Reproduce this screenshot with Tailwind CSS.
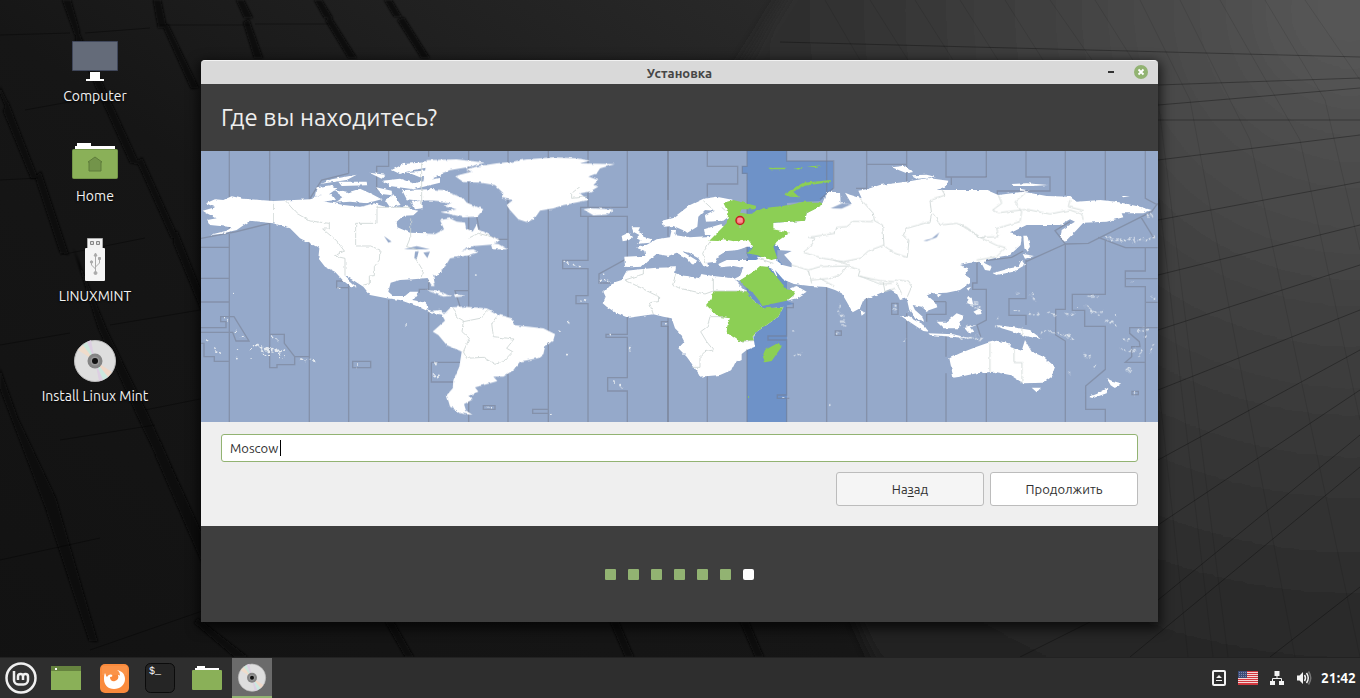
<!DOCTYPE html>
<html lang="ru">
<head>
<meta charset="utf-8">
<title>Установка</title>
<script src="https://cdn.jsdelivr.net/npm/@tailwindcss/browser@4"></script>
</head>
<body class="relative flex h-screen flex-col overflow-hidden bg-[#141414] font-['Ubuntu','Noto_Sans',sans-serif] text-[13px] leading-5">

<!-- Wallpaper -->
<svg class="absolute inset-0 h-full w-full" viewBox="0 0 1360 698" preserveAspectRatio="none" aria-hidden="true">
  <defs>
    <linearGradient id="base" x1="0" y1="1" x2="1" y2="0.3"><stop offset="0" stop-color="#121212"/><stop offset=".45" stop-color="#161616"/><stop offset="1" stop-color="#303030"/></linearGradient>
    <radialGradient id="glow" gradientUnits="userSpaceOnUse" cx="1350" cy="10" r="860"><stop offset="0" stop-color="#585858"/><stop offset=".35" stop-color="#414141"/><stop offset=".7" stop-color="#2b2b2b"/><stop offset="1" stop-color="#1c1c1c"/></radialGradient>
    <filter id="soft"><feGaussianBlur stdDeviation="7"/></filter>
    <filter id="edge"><feGaussianBlur stdDeviation="1"/></filter>
  </defs>
  <rect width="1360" height="698" fill="url(#base)"/>
  <path d="M795-20L735 75 760 400 900 720H1380V-20Z" fill="url(#glow)" filter="url(#soft)"/>
  <g fill="#080808" filter="url(#edge)">
    <path d="M62 0h9l9 32-5 4zM77 28l63 137-10-2-55-122zM142 157l38 84-9-3-34-76zM177 230l28 70v20l-32-78z"/>
    <path d="M153 0h8l6 28h-9zM168 24l31 64-8 1-28-62zM236 0h8l9 18h-9zM249 19l14 39h-9l-11-36zM314 0h8l11 18h-9zM331 17l26 41h-9l-23-38zM384 0h8l10 17h-8zM404 17l26 41h-9l-24-38z"/>
    <path d="M0 86l9 19-3 4-6-15zM8 101l30 77-7 1-28-68zM41 171l28 84-9-2-25-76zM73 247l34 83 40 82 58 128v18l-67-140-40-90zM0 368l18 50 38 80 42 144-9-1-44-134-45-118z"/>
    <path d="M160 440l45 108v22l-50-115zM198 618l50 39h-14l-40-34zM385 622h9l20 35h-9zM610 622h9l15 35h-9zM740 622h9l15 35h-9z"/>
  </g>
  <g stroke="#000" stroke-opacity=".35" fill="none">
    <path d="M85 33l65-5M0 35l70-2M25 110l55-10M60 255l85-17M0 180l38-2M110 325l90-15M0 345l70-12M145 410l60-12M60 440l95-15M0 560l100-22M90 650l115-40M160 25h90M255 24h75"/>
    <path d="M780 42l580 15M1158 85l202-7M1158 105l202-17M1158 120l202 0M1158 160l202-25M1158 220l202-38M1158 275l202-50M1158 330l202-65M1158 390l202-80M1158 460l202-110M1158 525l202-135M1158 600l202-165M1130 657l230-190M1020 657l70-35M1270 657l90-70" stroke-opacity=".3"/>
    <path d="M825 0l35 60M870 0l38 60M915 0l38 60M960 0l38 60M1005 0l38 60M1050 0l42 60M1095 0l63 100 70 557M1140 0l50 100 105 557M1180 0l70 140 110 517M1220 0l80 140 60 280M1265 0l60 100 35 150M1305 0l55 80M1158 190l55 467M1158 380l30 277" stroke-opacity=".1"/>
  </g>
</svg>

<main class="relative flex-1">
  <nav aria-label="Desktop" class="ml-5 flex w-[150px] flex-col pt-9 text-sm leading-5 text-[#f2f2f2]">
    <a href="#computer" class="flex h-25 flex-col items-center gap-0.5">
      <svg class="h-12 w-12" viewBox="0 0 48 48"><path d="M1.500 5.500h45v29h-45z" fill="#646b79" stroke="#40475a"/><path d="M19 36h10v7h4v2H15v-2h4z" fill="#fff"/></svg>
      <span class="[text-shadow:0_1px_2px_black]">Computer</span>
    </a>
    <a href="#home" class="flex h-25 flex-col items-center gap-0.5">
      <svg class="h-12 w-12" viewBox="0 0 48 48"><path d="M4 14V10h2V7h14v3h24v4z" fill="#fff"/><rect x="1.500" y="13.500" width="45" height="29" rx="1" fill="#8ab058" stroke="#739548"/><path d="M17 26l7-5 7 5h-1v9H18v-9z" fill="#73944a" stroke="#5f7d3b"/></svg>
      <span class="[text-shadow:0_1px_2px_black]">Home</span>
    </a>
    <a href="#usb" class="flex h-25 flex-col items-center gap-0.5">
      <svg class="h-12 w-12" viewBox="0 0 48 48"><path d="M16.500 2.500h15v10h-15z" fill="#f4f4f4" stroke="#aaa"/><path d="M19.500 5.500h3v3h-3zm6 0h3v3h-3z" fill="#ddd" stroke="#888"/><rect x="14" y="12" width="20" height="33" rx="1" fill="#f5f5f5"/><g stroke="#aaa" fill="#aaa"><path d="M24.500 37V20M20.500 26v3l4 4M28.500 23v4l-4 4" fill="none"/><path d="M23 20l1.500-3 1.500 3zM27.500 21.500h2v2h-2z"/><circle cx="20.500" cy="26" r="1.200"/><circle cx="24.500" cy="37" r="1.500"/></g></svg>
      <span class="[text-shadow:0_1px_2px_black]">LINUXMINT</span>
    </a>
    <a href="#install" class="flex h-25 flex-col items-center gap-0.5">
      <svg class="h-12 w-12" viewBox="0 0 48 48"><g id="disc"><circle cx="24" cy="25" r="20.500" fill="#dedede" stroke="#bcbcbc"/><path d="M24 25L7 14l5-5z" fill="#efdccb"/><path d="M24 25L12 9l4-3z" fill="#cce7dc"/><path d="M24 25L16 6l4-2z" fill="#ddcfe2"/><path d="M24 25L41 36l-4 5z" fill="#f0d8c8"/><path d="M24 25L37 41l-5 3z" fill="#cce8df"/><path d="M24 25L32 44l-4 1z" fill="#ddcfe2"/><circle cx="24" cy="25" r="7.500" fill="#858585"/><circle cx="24" cy="25" r="4.500" fill="#999"/><circle cx="24" cy="25" r="3" fill="#111"/></g></svg>
      <span class="[text-shadow:0_1px_2px_black]">Install Linux Mint</span>
    </a>
  </nav>

  <!-- Installer window -->
  <section aria-label="Установка" class="absolute top-15 right-[202px] left-[201px] flex flex-col rounded-t-sm bg-[#3e3e3e] shadow-[0_4px_12px_3px_rgba(0,0,0,0.65)]">
    <header class="flex h-6 items-center rounded-t-sm border-t border-[#f2f2f2] bg-[#d9d9d9] pr-2.5 pb-px pl-[55px]">
      <h2 class="flex-1 pt-0.5 text-center text-[13px] leading-5 font-bold text-[#464646]">Установка</h2>
      <div class="flex w-[45px] items-center justify-between">
        <button aria-label="Свернуть" class="flex h-4 w-4 items-center justify-center"><span class="h-0.5 w-1.5 bg-[#333]"></span></button>
        <button aria-label="Закрыть"><svg class="h-3.5 w-3.5" viewBox="0 0 14 14"><circle cx="7" cy="7" r="7" fill="#92b372"/><path d="M4.500 4.500l5 5m0-5l-5 5" stroke="#fff" stroke-width="1.800"/></svg></button>
      </div>
    </header>
    <h3 class="flex h-[67px] items-center px-5 text-2xl text-[#eeeeee]">Где вы находитесь?</h3>

    <svg class="block w-full" viewBox="201 151 957 271" role="img" aria-label="Карта часовых поясов">
      <defs>
        <filter id="coast" x="0" y="0" width="100%" height="100%"><feTurbulence type="fractalNoise" baseFrequency=".2" numOctaves="2" seed="4"/><feDisplacementMap in="SourceGraphic" scale="3" xChannelSelector="R" yChannelSelector="G"/></filter>
        <filter id="scatter" filterUnits="userSpaceOnUse" x="201" y="151" width="957" height="271"><feTurbulence type="fractalNoise" baseFrequency=".12" numOctaves="2" seed="9"/><feDisplacementMap in="SourceGraphic" scale="9" xChannelSelector="R" yChannelSelector="G"/></filter>
      </defs>
      <path d="M201 151h957v271H201z" fill="#95a9ca"/>
      <!-- Selected zone -->
      <path d="M747 151h40v10h46v28l-13 12-33 2v219h-40V174h-5v-8h5z" fill="#6e92c8"/>
      <!-- Zone boundaries over the sea -->
      <g fill="none" stroke="#74798a" stroke-opacity=".5">
        <g transform="translate(200 150) scale(.33333)" stroke-width="4">
          <path d="M88 0V825M88 138V292M3 292H88V385H3M3 456H88V500M3 533H78V515L62 515V500H102L147 573H108L98 547H3M3 580H12V620H43V634H88V825M209 0V653H231V644H284V620H328M209 553H253V580L284 620V644M328 0V825M330 145L365 90 446 70M446 0V70M446 390V825M410 393H446V413H410zM566 0V49H530V120M566 450V825M686 0V20M458 634H512V653H458zM686 480V825M3 265L110 245 209 220M686 386V418H658V428"/>
        </g>
        <g transform="translate(430 150) scale(.33333)" stroke-width="4">
          <path d="M116 0V825M116 190V422H75L90 470M140 200L150 250 205 268H234M234 0V825M355 0V825M474 0V172H452V199H474V331H398V356H474V437H438V461H474V825M592 0V172H474M474 199H592V325L507 372V399H540M592 500V553H528V562H592V683H533V723H592V825M714 0V150M714 350V825M4 637H90M4 637V696H70M160 767H195V778H160zM355 778H308V790H355"/>
        </g>
        <g transform="translate(590 150) scale(.33333)" stroke-width="4">
          <path d="M234 0V260M234 515H214V529H234V825M352 0V49H443V102H352V140M352 675V825M471 0V49H457V70H471V825M590 0V33H731V114L690 148M590 440V460H610V473H590V558H534V570H590V735H562V745H598M590 745V825"/>
        </g>
        <g transform="translate(780 150) scale(.33333)" stroke-width="4">
          <path d="M140 0V130M140 410V825M166 543H184V556H166zM260 0V43H380V0M260 43V115H228M260 440V825M380 43V95M335 460H354V493H335zM380 490V825M498 0V81H620M498 455V493H440V515M498 455H460M498 555V620M498 670V825M514 81V105"/>
        </g>
        <g transform="translate(960 150) scale(.33333)" stroke-width="4">
          <path d="M79 0V81M51 336V399H38V418H79V510L51 525 62 560M79 670V825M198 0V81H270V123H112V135M198 330V446H147V496H198V525M198 335L316 282V478H287V555L316 573V825M316 0V135M316 282L285 242 330 215M316 282L385 280 575 185 593 160M436 0V150M556 0V145L593 165M542 200L582 265M415 262L496 293H593M436 270V433H337V481H374V529H436V658L377 708V778H436V825M556 293V363H496V410H556V640M496 386H593M556 457H593M593 533H509V550L538 575 540 590H515V620L496 637H556V825M516 724H535V734H516zM52 335L155 322 190 303"/>
        </g>
      </g>
      <!-- Land -->
      <g fill="#fff" filter="url(#coast)">
        <g transform="translate(200 150) scale(.33333)">
          <path d="M8 182L45 172 18 160 45 148 70 150 95 139 130 146 220 153 330 148 380 155 430 165 480 170 520 160 560 172 600 170 630 178 655 182 640 196 610 197 590 215 592 232 630 248 680 250 695 275 725 272V368L700 378 704 400 692 398 684 384 640 388 600 390 572 398 565 425 580 438 615 438 630 425 655 425 637 450 665 455 680 462 682 478 700 486 725 480V490L690 487 650 468 600 450 560 445 510 435 490 410 455 388 430 375 470 412 455 412 430 392 405 365 375 350 355 325 358 295 330 280 300 265 270 235 220 220 150 212 110 240 60 252 25 256 80 242 95 232 60 228 30 225 22 210 50 205 20 190z"/>
          <path d="M360 102L395 88 470 74 440 90 385 98zM350 112L392 106 412 115 385 134 345 138zM400 120L440 128 480 116 515 132 545 148 500 160 450 155 405 158 430 142zM415 95L500 95 502 106 425 108zM508 68L556 74 545 86zM575 60L610 42 725 33V45L640 60 600 72zM620 66L725 58V78L660 82zM548 92L600 86 640 100 720 84V98L640 118 570 108zM528 112L575 122 576 136 545 132zM555 150L580 133 602 165 570 172zM606 120L700 118 725 128V150L660 152 620 148zM635 155L668 152 668 175 645 178zM340 140L395 132 408 150 360 156 330 150zM590 176L622 166 640 190 600 198z"/>
        </g>
        <g transform="translate(430 150) scale(.33333)">
          <path d="M-20 250L15 252 42 238 30 210 60 205 80 215 105 218 108 235 128 245 142 220 148 240 190 260 210 272 185 284 130 288 95 300 130 298 145 306 120 315 60 325 45 350 10 370-2 380 14 405 4 405-10 378-30 370zM185 280L205 282 232 298 190 298zM-10 30L80 28 165 38 110 52 60 60 30 72 0 95-20 95zM0 118L40 120 100 145 110 158 160 178 142 200 100 202 60 192 30 186 80 178 40 168 65 158 0 150-20 135z"/>
          <path d="M75 78L125 65 108 58 145 48 200 40 250 35 290 28 370 22 440 25 480 32 450 40 555 42 510 55 500 70 475 80 505 90 490 105 505 110 480 125 450 130 475 150 400 165 370 175 330 182 310 210 295 218 265 208 240 180 230 165 248 150 215 145 220 130 195 105 150 98 100 96zM460 178L480 175 545 178 545 186 530 194 490 196z"/>
          <path d="M-8 484L30 480 42 492 62 472 100 470 170 475 210 495 245 505 252 525 340 535 375 552 370 570 345 590 340 612 325 624 270 635 250 660 220 680 190 680 202 693 160 705 135 712 145 725 115 738 128 748 102 762 108 782 128 795 90 790 60 770 50 735 68 715 70 690 88 650 95 605 50 585 25 555 8 545 45 512 35 494zM-12 420L25 424 65 438 40 440zM72 432L108 438 75 441z"/>
        </g>
        <g transform="translate(590 150) scale(.33333)">
          <path d="M105 350L103 320 150 318 166 318 163 302 138 293 165 287 200 268 240 262 245 240 258 240 256 256 300 262 360 258 390 225 430 240 520 290 470 290 450 300 410 303 385 320 378 335 352 338 355 352 340 348 325 325 295 308 275 303 322 332 308 345 290 325 260 308 235 318 200 312 170 335 155 350 125 352zM216 212L250 203 300 165 340 146 380 140 430 150 430 190 400 212 348 215 345 198 375 182 345 180 325 200 322 230 290 250 278 240 250 228 222 230zM342 238L395 222 400 255 345 255zM125 232L150 232 145 242 158 250 160 260 185 268 180 278 140 282 155 272 138 265 148 255 130 245zM95 258L115 248 126 258 118 270 98 274z"/>
          <path d="M100 380L110 362 150 358 200 353 258 352 255 368 275 375 330 385 335 372 370 378 430 385 450 405 470 425 490 450 525 475 580 472 565 500 530 525 500 545 490 560 495 590 470 600 455 612 455 630 435 640 425 660 390 675 330 680 315 655 290 620 265 595 283 575 270 550 255 535 245 505 220 500 190 493 115 503 80 490 50 470 38 460 47 440 40 425 65 400 95 390zM385 342L410 330 440 330 500 330 500 320 550 325 585 350 620 345 720 345V412L660 408 612 402 572 385 555 360 530 350 448 392 430 388 450 378 460 354 430 348 390 352zM590 452L612 435 600 415 620 408 650 425 620 445z"/>
        </g>
        <g transform="translate(780 150) scale(.33333)">
          <path d="M-40 220L75 212 80 190 125 165 140 128 155 122 180 128 182 160 215 162 195 128 210 134 245 145 235 122 260 118 300 105 380 95 410 90 445 84 505 92 500 108 470 120 540 120 605 120V335L570 338 540 345 568 355 555 375 570 385 570 400 540 420 500 428 460 430 440 435 468 458 472 472 440 483 425 470 398 465 405 480 428 500 432 515 405 505 388 480 380 445 360 450 350 430 330 418 300 430 250 450 240 475 218 487 200 455 185 430 165 420 130 408 80 405 40 400-10 380-30 345 35 345 0 325 0 290-40 270z"/>
          <path d="M335 52L370 48 400 66 380 70zM395 76L440 74 465 80 415 86zM240 480L256 488 245 497zM362 497L385 500 430 525 447 545 430 543 395 520zM445 550L520 553 570 565 450 555zM470 515L500 515 530 490 552 498 535 535 490 535zM550 530L592 525 570 532 580 545 565 548zM562 440L575 443 580 465 562 460zM580 485L600 475 605 492 590 494zM560 415L573 410 565 422zM470 430L485 434 475 440z"/>
        </g>
        <g transform="translate(960 150) scale(.33333)">
          <path d="M0 120L80 120 115 135 190 125 260 138 330 140 350 155 420 150 470 155 540 170 575 180 550 190 485 190 490 202 440 215 370 218 350 240 315 275 302 265 305 240 345 215 330 208 300 225 200 225 150 250 185 260 182 285 150 315 120 320 80 330 74 340 95 350 90 362 75 360 62 335 0 340-40 340V120zM155 102L200 100 265 105 220 108 160 108zM180 116L210 122 180 122zM485 138L510 138 490 142zM190 260L203 260 210 290 200 305 193 295zM188 312L222 318 195 326zM185 330L195 345 160 365 110 375 98 370 150 355 175 350z"/>
          <path d="M108 525L160 532 210 540 245 567 195 558 160 545 125 535zM-32 625L0 610 50 590 80 580 110 572 150 580 148 590 185 602 195 570 215 605 250 620 285 650 275 680 250 698 190 700 150 675 100 665 50 670 0 680-20 683zM215 713L243 713 230 727zM440 685L455 692 483 700 465 714 452 706zM388 740L410 732 445 713 440 730 400 744z"/>
        </g>
      </g>
      <!-- Inland water -->
      <g fill="#95a9ca">
        <path transform="translate(200 150) scale(.33333)" d="M612 297L650 288 690 298 640 298zM645 305L656 304 650 328 643 325zM670 308L690 305 682 324zM552 258L575 275 565 278zM420 160L515 160 490 168z"/>
        <path transform="translate(590 150) scale(.33333)" d="M562 300L605 303 582 314 605 340 605 352 578 345 562 325zM385 318L410 303 440 306 470 312 476 325 440 325 390 333zM430 304L470 292 455 305zM262 352L325 348 382 358 375 376 335 372 315 382 268 374z"/>
        <path transform="translate(780 150) scale(.33333)" d="M430 272L455 266 478 247 470 262 440 273zM152 175L186 160 215 162 185 176z"/>
      </g>
      <path transform="translate(590 150) scale(.33333)" d="M471 310L500 318 505 328 478 330zM450 392L475 422 515 470 590 452 612 462 525 478 505 468zM555 360L590 400 590 415 572 405z" fill="#6e92c8"/>
      <!-- Selected land -->
      <g fill="#8ccf55" filter="url(#coast)">
        <path transform="translate(590 150) scale(.33333)" d="M400 158L430 150 500 168 495 178 455 178 450 188 480 192 520 175 600 165 640 155 690 155 697 165 670 180 650 190 645 212 550 218 550 238 600 248 575 265 560 275 550 290 562 325 545 330 500 315 470 310 490 290 475 270 440 275 400 268 385 273 358 272 375 255 410 220 415 190zM583 134L610 115 640 98 722 90 722 96 645 107 610 125 628 142 600 140zM370 423L470 423 490 450 520 475 580 472 565 500 530 525 500 545 488 560 492 572 448 574 410 548 412 525 420 505 385 500 348 465 365 445zM448 392L490 365 510 348 530 350 555 375 580 405 590 418 617 425 612 435 590 452 520 467 490 430 460 405zM525 600L565 578 575 590 545 633 525 637 518 618zM535 53h55l-5 5h-45zM610 56l30-5-15 8zM650 50l45-4-20 6z"/>
      </g>
      <path d="M748 397h1" stroke="#8ccf55" stroke-width="1.500"/>
      <!-- Small islands -->
      <g fill="none" stroke="#e6ebf0" stroke-width="5" stroke-linecap="round" stroke-dasharray="3 11" filter="url(#scatter)">
        <g transform="translate(200 150) scale(.33333)"><path d="M105 434h1M73 505l17 9M103 546l8-6M128 563h1M20 570l8 4M44 603l26 5M110 592l8 4M110 620h1M152 601l12-13 80 12M170 592l90 12M185 600l50 4M188 611l20 3M153 627h1M236 606v15M253 622l10-6M218 558l18 9M302 630l48 3M472 645h1M418 409h1M700 676h18M705 640h6M618 525h1"/></g>
        <g transform="translate(430 150) scale(.33333)"><path d="M12 640h5M10 676h15M137 375h1M403 340l48 7M508 394h40M517 373h1M450 450l25 5M418 518h1M392 541h1M415 614h8M536 557h3M605 593h1M554 693h1M576 710h1M170 773h20M706 521h2M360 788h5"/></g>
        <g transform="translate(780 150) scale(.33333)"><path d="M45 542h1M44 616l18-4M5 740h6M175 470l10 30 2 28M173 548h5M344 465l-3 24M150 759h10M372 576h1M555 562l45-2"/></g>
        <g transform="translate(960 150) scale(.33333)"><path d="M172 428h1M215 432l12 25M160 485h24M110 500l8 8M205 492l38-5M270 485l15 10M320 492h24M353 472h1M378 470l40 25M390 437h20M395 485l36-6M441 512l30 20M465 495h12M245 548l36-5M295 548l50 20M375 615l15 5M400 653h1M328 666h4M490 568l20 2M480 600l50 0M545 600l-10 20M505 660l10-8M535 540l40-1M555 560l10 5M577 585v22M512 393h10M522 729h5M577 447h5M440 267l50 5 100-7M562 197h15M35 465l30 25M20 530l25 5M0 562l60 2M105 532h20M30 450l25 20"/></g>
      </g>
      <!-- Borders over land -->
      <g fill="none" stroke="#cbd4d2" stroke-width="2.500" filter="url(#coast)">
        <g transform="translate(200 150) scale(.33333)"><path d="M220 153V220M257 153L290 190 330 213 388 220V237H368L410 272 433 303 403 318 435 325V378M632 155V172H531V220H467V288H512L540 300 538 330 523 350V377L508 378V402L490 405M632 205V260L620 290 655 300M646 325L668 360 663 388M665 40V165"/></g>
        <g transform="translate(430 150) scale(.33333)"><path d="M70 472L80 500 100 512 96 545 118 565 100 605 110 625 160 622 195 643 220 635 248 605 230 595 252 567 190 560 185 520 200 500M100 515L150 505 175 480M115 265L145 250 190 262M450 110L425 130 425 145 470 140"/></g>
        <g transform="translate(590 150) scale(.33333)"><path d="M160 358V372L105 390 206 440 205 455 178 458 190 493M258 370L248 405 270 415 345 432 370 423H470M370 385V425M410 500H360L352 530 332 545 350 575 370 600 345 605 330 620V652H310M348 340L338 310 360 275M340 152L370 180M395 172L410 185M448 574L492 572M505 325L550 340"/></g>
        <g transform="translate(780 150) scale(.33333)"><path d="M240 145L280 190 283 212 308 225 312 285 265 303 240 325 190 335 130 325 70 307 90 290 105 265 85 262 165 250 170 232 200 230 220 214 280 215M312 287L345 310 382 322 387 270 370 255 380 235 450 215 455 192 450 152 495 135 485 118M460 192L480 225 530 220 560 232 600 262M35 345L85 360 95 400M85 360L120 350 200 348 240 360 235 378 300 392 340 395 360 390 385 395 395 410 382 440M240 378L300 402 335 400M200 350L180 375 150 385 95 390M160 330L210 345M310 400L315 425 345 415M350 400L365 430M120 385L165 410"/></g>
        <g transform="translate(960 150) scale(.33333)"><path d="M115 135L125 160 98 180 115 188 200 178 270 192 330 180 365 192 370 210M195 130L165 155 185 185 180 215 110 235 115 260 60 262 0 223M60 262L108 285 137 293 110 320 50 330M330 150L325 170 372 182M90 580V665M162 592V638H186V700M186 535V555"/></g>
      </g>
      <g stroke="#c51e22"><path d="M740 224v4" stroke="#b9b9b9"/><circle cx="740" cy="220.500" r="4" fill="#f77d7d" stroke-width="1.500"/><path d="M738 219h4m-4 2h4" stroke="#fac0c0" stroke-width=".7"/></g>
    </svg>

    <form class="flex h-26 flex-col gap-2.5 bg-[#efefef] px-5 pt-3 text-[#303030]" onsubmit="return false">
      <label class="relative block">
        <input type="text" value="Moscow" aria-label="Город" class="block h-7 w-full rounded-[3px] border border-[#92b372] bg-white px-2 text-[13px] text-[#303030] outline-none">
        <span class="absolute top-1.5 left-[59px] h-4 w-px bg-black"></span>
      </label>
      <div class="flex justify-end gap-1.5">
        <button type="button" class="h-[34px] w-[148px] rounded-[3px] border border-[#bcbcbc] bg-[#f5f5f5]">На<span class="underline underline-offset-2">з</span>ад</button>
        <button type="button" class="h-[34px] w-[148px] rounded-[3px] border border-[#bcbcbc] bg-white">Продолжить</button>
      </div>
    </form>
    <div class="flex h-24 items-center justify-center gap-3" role="img" aria-label="Шаг 7 из 7">
      <span class="size-[11px] rounded-[1px] bg-[#92b372]"></span><span class="size-[11px] rounded-[1px] bg-[#92b372]"></span><span class="size-[11px] rounded-[1px] bg-[#92b372]"></span><span class="size-[11px] rounded-[1px] bg-[#92b372]"></span><span class="size-[11px] rounded-[1px] bg-[#92b372]"></span><span class="size-[11px] rounded-[1px] bg-[#92b372]"></span><span class="size-[11px] rounded-xs bg-white"></span>
    </div>
  </section>
</main>

<!-- Panel -->
<footer class="relative flex h-[41px] items-center justify-between border-t border-[#222] bg-[#2e2e2e] pr-1">
  <div class="flex h-full items-center">
    <button aria-label="Menu" class="flex w-[42px] justify-center"><svg class="size-8" viewBox="0 0 32 32"><circle cx="16" cy="16" r="14.500" fill="#333" stroke="#f0f0f0" stroke-width="2.500"/><path d="M9 9v9a4.500 4.500 0 0 0 4.500 4.500h5A4.500 4.500 0 0 0 23 18v-3.500a2.500 2.500 0 0 0-5 0V18M18 14.500a2.500 2.500 0 0 0-5 0V18" fill="none" stroke="#f0f0f0" stroke-width="2.500"/></svg></button>
    <button aria-label="Show desktop" class="flex w-12 justify-center"><svg class="h-6 w-[30px]" viewBox="0 0 30 24"><path d="M0 0h30v24H0z" fill="#8ab058"/><path d="M0 0h30v5H0z" fill="#66833f"/><path d="M4 2h2v2H4z" fill="#fff"/></svg></button>
    <button aria-label="Firefox" class="flex w-12 justify-center"><svg class="size-[29px]" viewBox="0 0 29 29"><rect width="29" height="29" rx="5" fill="#fa8a3c"/><path d="M2 2h25v9H2z" fill="#fc9950" opacity=".6"/><path d="M5 9c1 2 1 3 2 4 1-2 3-3 5-2 1 1 0 2-2 2 0 3 2 5 5 4 3-1 4-3 3-6 1 0 2 0 2 1 0-3-1-5-3-6 5 1 8 4 8 9 0 6-5 10-11 10S4 21 4 15c0-2 0-4 1-6z" fill="#fff"/></svg></button>
    <button aria-label="Terminal" class="flex w-11 justify-center"><svg class="size-[30px]" viewBox="0 0 30 30"><rect x=".5" y=".5" width="29" height="29" rx="5" fill="#252525" stroke="#0b0b0b"/><text x="4" y="11" fill="#fff" font-family="Liberation Mono, monospace" font-size="10">$_</text></svg></button>
    <button aria-label="Files" class="flex w-[50px] justify-center"><svg class="size-[30px]" viewBox="0 0 30 30"><path d="M3 7V5h2V3h8v2h14v2z" fill="#fff"/><rect y="7" width="30" height="20" rx="1" fill="#8ab058"/></svg></button>
    <button aria-label="Установка" class="flex h-full w-10 items-center justify-center border-b-2 border-[#92b372] bg-[#6b6b6b]"><svg class="size-8" viewBox="0 0 48 48"><use href="#disc"/></svg></button>
  </div>
  <div class="flex items-center gap-[11px] text-white">
    <svg class="size-4" viewBox="0 0 16 16" fill="none" stroke="#f3f3f3"><rect x="2" y="1" width="12" height="14" rx="1" stroke-width="2"/><path d="M5 8l3-3 3 3zM5 10h6v1H5z" fill="#f3f3f3" stroke="none"/></svg>
    <svg class="h-3.5 w-5" viewBox="0 0 20 14"><path d="M0 0h20v14H0z" fill="#f4d6d6"/><path d="M0 0h20v1H0zM0 2h20v1H0zM0 4h20v1H0zM0 6h20v1H0zM0 8h20v1H0zM0 10h20v1H0zM0 12h20v2H0z" fill="#d1383f"/><path d="M0 0h9v7H0z" fill="#3c4c78"/><path d="M1 1.500h7M1 3.500h7M1 5.500h7" stroke="#7d89ac" stroke-dasharray="1 1"/></svg>
    <svg class="size-4" viewBox="0 0 16 16"><path d="M5.500 1h5v5h-5zM1 11h5v4H1zM10 11h5v4h-5z" fill="#f3f3f3"/><path d="M8 5v4M3.500 12V8.500h9V12" fill="none" stroke="#f3f3f3"/></svg>
    <div class="flex items-center gap-[9px]">
      <svg class="size-4" viewBox="0 0 16 16" fill="none" stroke="#f3f3f3" stroke-width="1.500"><path d="M1 5.500h2.500L7 2v12L3.500 10.500H1z" fill="#f3f3f3" stroke="none"/><path d="M8.500 5q2 3 0 6M10.500 3q3.500 5 0 10"/><path d="M12.500 1.500q4.500 6.500 0 13" stroke="#777"/></svg>
      <time class="text-sm leading-5 font-bold">21:42</time>
    </div>
  </div>
</footer>
</body>
</html>
